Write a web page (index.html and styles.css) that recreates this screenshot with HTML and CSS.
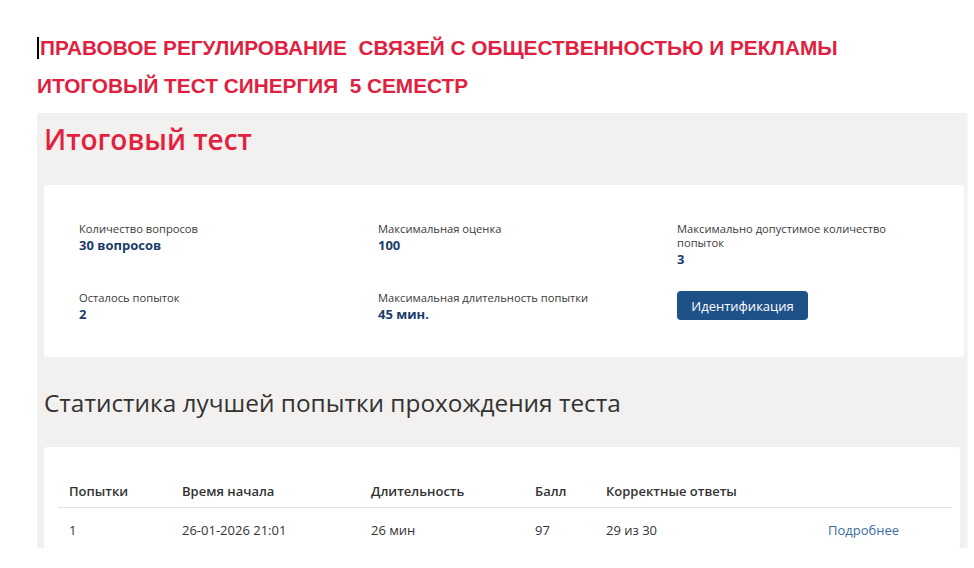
FILE: index.html
```html
<!DOCTYPE html>
<html lang="ru">
<head>
<meta charset="utf-8">
<title>Итоговый тест</title>
<link rel="stylesheet" href="styles.css">
</head>
<body>
<header class="doc-head">
  <p class="doc-line first"><span class="caret"></span>ПРАВОВОЕ РЕГУЛИРОВАНИЕ&nbsp; СВЯЗЕЙ С ОБЩЕСТВЕННОСТЬЮ И РЕКЛАМЫ</p>
  <p class="doc-line">ИТОГОВЫЙ ТЕСТ СИНЕРГИЯ&nbsp; 5 СЕМЕСТР</p>
</header>
<main class="panel">
  <h1 class="page-title">Итоговый тест</h1>
  <section class="card info">
    <div class="info-grid">
      <div class="field">
        <div class="label">Количество вопросов</div>
        <div class="value">30 вопросов</div>
      </div>
      <div class="field">
        <div class="label">Максимальная оценка</div>
        <div class="value">100</div>
      </div>
      <div class="field">
        <div class="label">Максимально допустимое количество<br>попыток</div>
        <div class="value">3</div>
      </div>
      <div class="field">
        <div class="label">Осталось попыток</div>
        <div class="value">2</div>
      </div>
      <div class="field">
        <div class="label">Максимальная длительность попытки</div>
        <div class="value">45 мин.</div>
      </div>
      <div class="field">
        <button class="btn">Идентификация</button>
      </div>
    </div>
  </section>
  <h2 class="section-title">Статистика лучшей попытки прохождения теста</h2>
  <section class="card stats">
    <table class="tbl">
      <thead>
        <tr>
          <th class="c1">Попытки</th>
          <th class="c2">Время начала</th>
          <th class="c3">Длительность</th>
          <th class="c4">Балл</th>
          <th class="c5">Корректные ответы</th>
          <th class="c6"></th>
        </tr>
      </thead>
      <tbody>
        <tr>
          <td>1</td>
          <td>26-01-2026 21:01</td>
          <td>26 мин</td>
          <td>97</td>
          <td>29 из 30</td>
          <td><a class="more" href="#">Подробнее</a></td>
        </tr>
      </tbody>
    </table>
  </section>
</main>
</body>
</html>
```

FILE: styles.css
```css
html, body {
  margin: 0;
  padding: 0;
  background: #ffffff;
}
body {
  width: 974px;
  height: 568px;
  overflow: hidden;
  font-family: "Open Sans", "Liberation Sans", sans-serif;
}
.doc-head {
  padding: 36px 0 15px 37px;
}
.doc-line {
  margin: 0;
  font-family: "Liberation Sans", Arial, sans-serif;
  font-weight: bold;
  font-size: 20.8px;
  line-height: 24px;
  height: 24px;
  color: #e01f41;
  display: flex;
  align-items: center;
}
.doc-line.first {
  margin-bottom: 14px;
}
.caret {
  display: inline-block;
  width: 2px;
  height: 22px;
  background: #000;
  margin-right: 1px;
}
.panel {
  margin-left: 37px;
  width: 931px;
  height: 435px;
  box-sizing: border-box;
  background: #f2f1ef;
  padding: 0 2px 0 7px;
  overflow: hidden;
  border-right: 2px solid #f7f6f4;
}
.page-title {
  margin: 0;
  padding-top: 10px;
  height: 72px;
  box-sizing: border-box;
  font-size: 28px;
  line-height: 32px;
  font-weight: 600;
  color: #e2213f;
}
.card {
  background: #ffffff;
  border-radius: 3px;
}
.info {
  padding: 37px 0 34px 35px;
  height: 172px;
  box-sizing: border-box;
}
.info-grid {
  display: grid;
  grid-template-columns: 299px 299px 1fr;
  row-gap: 23px;
}
.label {
  font-size: 11.2px;
  line-height: 14px;
  color: #3a3a3a;
}
.value {
  font-size: 13px;
  line-height: 18px;
  font-weight: 700;
  color: #1b3c6a;
}
.btn {
  width: 131px;
  height: 29px;
  border: 0;
  border-radius: 4px;
  background: #1f5189;
  color: #ffffff;
  font-family: "Open Sans", "Liberation Sans", sans-serif;
  font-size: 13px;
  padding: 0;
  cursor: pointer;
}
.section-title {
  margin: 0;
  padding-top: 30px;
  height: 90px;
  box-sizing: border-box;
  font-size: 24.4px;
  line-height: 32px;
  font-weight: 400;
  color: #333333;
}
.stats {
  padding: 28px 14px 20px 14px;
  margin-right: 4px;
}
.tbl {
  width: 894px;
  border-collapse: collapse;
  font-size: 13px;
  color: #333333;
}
.tbl th, .tbl td {
  text-align: left;
  padding: 0 0 0 11px;
}
.tbl th {
  font-weight: 600;
  height: 32px;
  border-bottom: 1px solid #e3e3e3;
  vertical-align: middle;
}
.tbl td {
  height: 44px;
  vertical-align: middle;
}
.c1 { width: 102px; }
.c2 { width: 178px; }
.c3 { width: 153px; }
.c4 { width: 60px; }
.c5 { width: 211px; }
.more {
  color: #3a6ca3;
  text-decoration: none;
}
```
